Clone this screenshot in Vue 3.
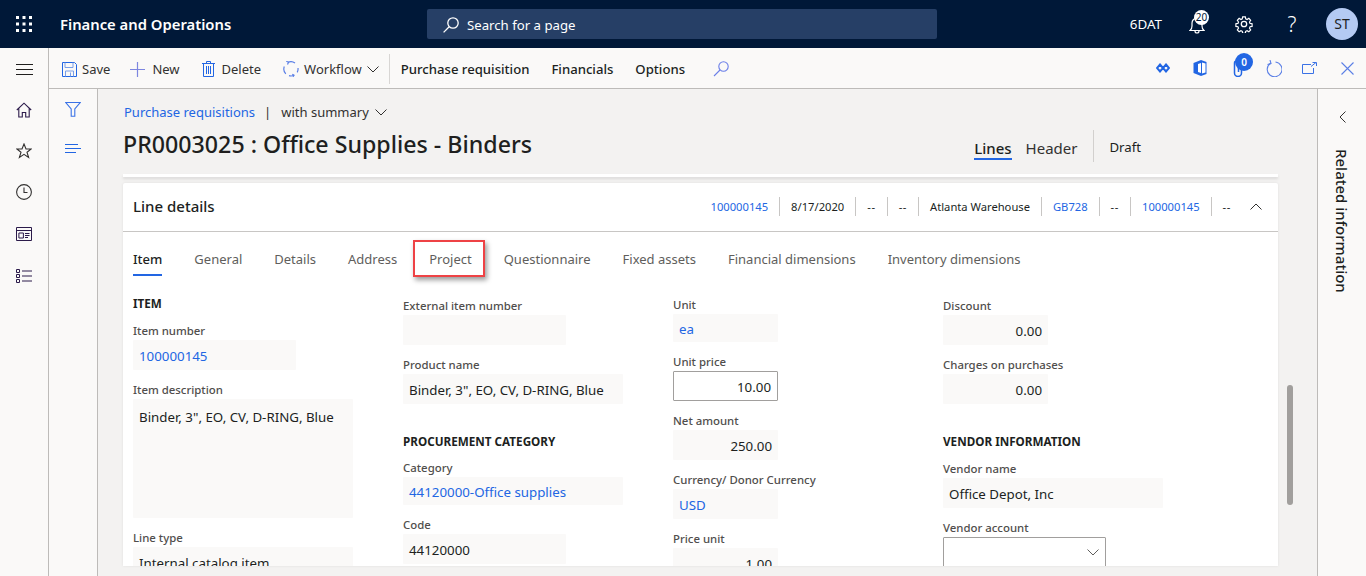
<script setup>
const columns = [
  [
    { heading: 'ITEM', first: true },
    { label: 'Item number', value: '100000145', w: 163, link: true },
    { label: 'Item description', value: 'Binder, 3", EO, CV, D-RING, Blue', w: 220, h: 119 },
    { label: 'Line type', value: 'Internal catalog item', w: 220 },
  ],
  [
    { label: 'External item number', value: '', w: 163 },
    { label: 'Product name', value: 'Binder, 3", EO, CV, D-RING, Blue', w: 220 },
    { heading: 'PROCUREMENT CATEGORY' },
    { label: 'Category', value: '44120000-Office supplies', w: 220, link: true, compact: true },
    { label: 'Code', value: '44120000', w: 163 },
  ],
  [
    { label: 'Unit', value: 'ea', w: 105, link: true, compact: true },
    { label: 'Unit price', value: '10.00', w: 105, right: true, edit: true },
    { label: 'Net amount', value: '250.00', w: 105, right: true },
    { label: 'Currency/ Donor Currency', value: 'USD', w: 105, link: true },
    { label: 'Price unit', value: '1.00', w: 105, right: true },
  ],
  [
    { label: 'Discount', value: '0.00', w: 105, right: true },
    { label: 'Charges on purchases', value: '0.00', w: 105, right: true },
    { heading: 'VENDOR INFORMATION' },
    { label: 'Vendor name', value: 'Office Depot, Inc', w: 220 },
    { label: 'Vendor account', value: '', w: 163, edit: true, select: true },
  ],
]
const summary = [
  { t: '100000145', link: true }, { t: '8/17/2020' }, { t: '--' }, { t: '--' },
  { t: 'Atlanta Warehouse' }, { t: 'GB728', link: true }, { t: '--' },
  { t: '100000145', link: true }, { t: '--' },
]
const tabs = ['Item', 'General', 'Details', 'Address', 'Project', 'Questionnaire', 'Fixed assets', 'Financial dimensions', 'Inventory dimensions']
</script>

<template>
  <div class="app">
    <header class="topbar">
      <svg class="waffle" width="16" height="16" viewBox="0 0 16 16" fill="#fff">
        <rect x="0" y="0" width="3" height="3" /><rect x="6.5" y="0" width="3" height="3" /><rect x="13" y="0" width="3" height="3" />
        <rect x="0" y="6.5" width="3" height="3" /><rect x="6.5" y="6.5" width="3" height="3" /><rect x="13" y="6.5" width="3" height="3" />
        <rect x="0" y="13" width="3" height="3" /><rect x="6.5" y="13" width="3" height="3" /><rect x="13" y="13" width="3" height="3" />
      </svg>
      <div class="brand">Finance and Operations</div>
      <div class="search">
        <svg width="18" height="18" viewBox="0 0 18 18" fill="none" stroke="#fff" stroke-width="1.3"><circle cx="11" cy="7" r="5.2" /><path d="M7.2 10.8 1.6 16.4" /></svg>
        <span>Search for a page</span>
      </div>
      <div class="top-right">
        <span class="company">6DAT</span>
        <span class="bell">
          <svg width="16" height="18" viewBox="0 0 16 18" fill="none" stroke="#fff" stroke-width="1.2"><path d="M1 14.5c1.5-1 2-2 2-4.5V7a5 5 0 0 1 10 0v3c0 2.500.5 3.500 2 4.500Z" /><path d="M6 15a2 2 0 0 0 4 0" /></svg>
          <b class="bell-badge">20</b>
        </span>
        <svg class="gear" width="18" height="18" viewBox="0 0 18 18" fill="none" stroke="#fff" stroke-width="1.3"><circle cx="9" cy="9" r="2.7" /><path d="M7.500 1h3l.4 2.300 1.500.7 2-1.300 2 2.200-1.300 1.900.6 1.500 2.300.4v3l-2.300.4-.6 1.500 1.300 1.900-2 2.200-2-1.300-1.500.7-.4 2.300h-3l-.4-2.300-1.500-.7-2 1.300-2-2.200 1.300-1.900-.6-1.500-2.300-.4v-3l2.300-.4.6-1.500L1.600 4.900l2-2.200 2 1.300 1.500-.7Z" transform="translate(.9 .9) scale(.9)" /></svg>
        <span class="help">?</span>
        <span class="avatar">ST</span>
      </div>
    </header>

    <div class="shell">
      <nav class="nav">
        <svg class="burger" width="17" height="11" viewBox="0 0 17 11" stroke="#201f1e"><path d="M0 .5h17M0 5.500h17M0 10.500h17" /></svg>
        <svg width="16" height="16" viewBox="0 0 16 16" fill="none" stroke="#2b1a4a" stroke-width="1.100"><path d="M.8 8 8 1.200 15.200 8M2.800 6.500V15h3.500v-4.500h3.400V15h3.500V6.500" /></svg>
        <svg width="16" height="16" viewBox="0 0 16 16" fill="none" stroke="#323130" stroke-width="1.100"><path d="m8 1 2 5h5.200l-4.200 3.200 1.600 5.300L8 11.300l-4.600 3.200L5 9.200.8 6H6Z" /></svg>
        <svg width="16" height="16" viewBox="0 0 16 16" fill="none" stroke="#323130" stroke-width="1.100"><circle cx="8" cy="8" r="7.400" /><path d="M8 3.500V8.500H11.500" /></svg>
        <svg width="16" height="14" viewBox="0 0 16 14" fill="none" stroke="#2b1a4a"><path d="M.5.500h15v13H.5ZM.5 3.500h15M2.900 6h4.500v5H2.900ZM9 6.500h4.500M9 8.500h4.500M9 10.500h3" /></svg>
        <svg width="16" height="14" viewBox="0 0 16 14" fill="none" stroke="#2b1a4a"><path d="M.5.500h3v3h-3ZM.5 5.500h3v3h-3ZM.5 10.500h3v3h-3ZM6 2h10M6 7h10M6 12h10" /></svg>
      </nav>
      <div class="rest">
        <div class="toolbar">
          <button class="tool t-save">
            <svg width="15" height="15" viewBox="0 0 15 15" fill="none" stroke="#2266e3"><path d="M.5.500h12l2 2v12H.500Z" /><path d="M3 .5v5h8v-5M3.500 14.500v-5.500h8v5.500M8.500 10.500v4" stroke="#7a9fe8" /></svg>
            <span>Save</span>
          </button>
          <button class="tool t-new">
            <svg width="15" height="15" viewBox="0 0 15 15" stroke="#7d86e0" stroke-width="1.200"><path d="M7.500 0v15M0 7.500h15" /></svg>
            <span>New</span>
          </button>
          <button class="tool t-delete">
            <svg width="13" height="16" viewBox="0 0 13 16" fill="none" stroke="#2266e3"><path d="M0 2.500h13M4.500 2.500V.5h4v2M1.500 2.500v13h10v-13M4.500 5v8M6.500 5v8M8.500 5v8" /></svg>
            <span>Delete</span>
          </button>
          <button class="tool t-flow">
            <svg width="16" height="16" viewBox="0 0 16 16" fill="none" stroke="#5a7fe6" stroke-width="1.200"><path d="M5 1.300A7 7 0 0 1 12 2M15 7a7 7 0 0 1-.8 4.400M11 14.300a7 7 0 0 1-5 .4M2.800 12.800A7 7 0 0 1 1.300 5.500" /><path d="m4.500 3.500 1-2.200-2.200-1M10 15.800l1-1.500-1.700-1" /></svg>
            <span>Workflow</span>
            <svg class="chev" width="12" height="7" viewBox="0 0 12 7" fill="none" stroke="#323130"><path d="m.5.500 5.500 5.500L11.500.5" /></svg>
          </button>
          <i class="tool-sep"></i>
          <button class="menu">Purchase requisition</button>
          <button class="menu">Financials</button>
          <button class="menu">Options</button>
          <svg class="t-search" width="16" height="16" viewBox="0 0 16 16" fill="none" stroke="#6b7fe8" stroke-width="1.100"><circle cx="10.500" cy="5.500" r="4.700" /><path d="M7 9 1 15" /></svg>
          <div class="tool-right">
            <svg width="14" height="10" viewBox="0 0 14 10" fill="none" stroke="#2266e3" stroke-width="2"><path d="m4 1.500 3 3.500-3 3.500L1 5ZM10 1.500 13 5l-3 3.500L7 5Z" /></svg>
            <svg width="14" height="16" viewBox="0 0 14 16"><path d="M8 0 .500 3v10L8 16l5.500-2V2Z" fill="#2266e3" /><path d="M5 4l3-1v10l-3-1Z" fill="#fff" /><path d="M9 2.500l3.500 1v9l-3.500 1Z" fill="#fff" /></svg>
            <span class="clip">
              <svg width="10" height="18" viewBox="0 0 10 18" fill="none" stroke="#2266e3" stroke-width="1.500"><path d="M8.500 4v10a3.500 3.500 0 0 1-7 0V4a2 2 0 0 1 4 0v9" /></svg>
              <b class="clip-badge">0</b>
            </span>
            <svg width="16" height="17" viewBox="0 0 16 17" fill="none" stroke="#5a7fe6" stroke-width="1.100"><path d="M4.500 3.200a7.400 7.400 0 1 0 5-1.200" /><path d="M4 0 5 3.500 1.500 4.500" /></svg>
            <svg width="15" height="12" viewBox="0 0 15 12" fill="none" stroke="#3a72e6"><path d="M9 2.500H.5v9h11V6M9 4.500l5-4M10.500.5h4v3.500" /></svg>
            <svg width="13" height="13" viewBox="0 0 13 13" stroke="#5a7fe6" stroke-width="1.100"><path d="m.5.500 12 12M12.500.5l-12 12" /></svg>
          </div>
        </div>
        <div class="work">
          <aside class="filter">
            <svg width="16" height="15" viewBox="0 0 16 15" fill="none" stroke="#3a72e6" stroke-width="1.100"><path d="M.8.500h14.400L9.800 7v7.200H6.200V7Z" /></svg>
            <svg width="16" height="9" viewBox="0 0 16 9" stroke="#2266e3"><path d="M0 .5h13M0 4.500h16M0 8.500h11" /></svg>
          </aside>
          <main class="main">
            <section class="page-head">
              <div class="crumb">
                <a>Purchase requisitions</a><i>|</i><span>with summary</span>
                <svg width="12" height="7" viewBox="0 0 12 7" fill="none" stroke="#323130"><path d="m.5.500 5.500 5.500L11.500.5" /></svg>
              </div>
              <div class="title-row">
                <h1>PR0003025 : Office Supplies - Binders</h1>
                <div class="views">
                  <span class="view on">Lines</span>
                  <span class="view">Header</span>
                  <i class="view-sep"></i>
                  <span class="status">Draft</span>
                </div>
              </div>
            </section>
            <div class="prev-edge"></div>
            <section class="card">
              <div class="card-head">
                <h2>Line details</h2>
                <div class="summary">
                  <span v-for="(s, i) in summary" :key="i" :class="{ lnk: s.link, dash: s.t === '--' }">{{ s.t }}</span>
                </div>
                <svg class="up" width="12" height="7" viewBox="0 0 12 7" fill="none" stroke="#323130"><path d="M.5 6.500 6 1l5.500 5.500" /></svg>
              </div>
              <div class="tabs">
                <span v-for="t in tabs" :key="t" class="tab" :class="{ on: t === 'Item', mark: t === 'Project' }">{{ t }}</span>
              </div>
              <div class="form">
                <div v-for="(col, c) in columns" :key="c" class="col">
                  <template v-for="(f, i) in col" :key="i">
                    <div v-if="f.heading" class="heading" :class="{ first: f.first }">{{ f.heading }}</div>
                    <div v-else class="field">
                      <label>{{ f.label }}</label>
                      <div class="box" :class="{ lnk: f.link, right: f.right, edit: f.edit, tall: f.h, compact: f.compact }" :style="{ width: f.w + 'px', height: f.h ? f.h + 'px' : null }">
                        {{ f.value }}
                        <svg v-if="f.select" class="sel" width="12" height="7" viewBox="0 0 12 7" fill="none" stroke="#605e5c"><path d="m.5.500 5.500 5.500L11.500.5" /></svg>
                      </div>
                    </div>
                  </template>
                </div>
              </div>
            </section>
            <div class="scroll"></div>
          </main>
          <aside class="related">
            <svg width="7" height="12" viewBox="0 0 7 12" fill="none" stroke="#323130"><path d="M6.500.5 1 6l5.500 5.500" /></svg>
            <span>Related information</span>
          </aside>
        </div>
      </div>
    </div>
  </div>
</template>

<style>
html, body { margin: 0; overflow: hidden; background: #f3f2f1; }
</style>

<style scoped>
.app { width: 1366px; height: 576px; display: flex; flex-direction: column; overflow: hidden; font-family: "Noto Sans", "Open Sans", sans-serif; color: #201f1e; font-size: 13px; }
svg { flex: none; display: block; }
button { font: inherit; color: inherit; background: none; border: 0; padding: 0; }
i { font-style: normal; }

.topbar { height: 48px; flex: none; background: #001838; color: #fff; display: flex; align-items: center; }
.waffle { margin-left: 16px; }
.brand { margin-left: 28px; font-size: 14.8px; font-weight: 600; width: 367px; white-space: nowrap; }
.search { width: 510px; height: 30px; background: #263f66; border-radius: 2px; display: flex; align-items: center; gap: 7px; padding: 2px 0 0 15px; box-sizing: border-box; font-size: 13.2px; }
.top-right { margin-left: auto; display: flex; align-items: center; }
.company { font-size: 13.4px; margin-right: 27px; }
.bell { position: relative; margin-right: 30px; display: block; margin-top: 2px; }
.bell-badge { position: absolute; left: 5px; top: -6px; width: 15px; height: 15px; border-radius: 50%; background: #fff; color: #001838; font-size: 10px; font-weight: 400; text-align: center; line-height: 15px; }
.gear { margin-right: 33px; }
.help { font-size: 21px; font-weight: 300; margin-right: 28px; width: 12px; text-align: center; }
.avatar { width: 32px; height: 32px; border-radius: 50%; background: #b4caf3; color: #201f1e; font-size: 14px; text-align: center; line-height: 32px; margin-right: 8px; }

.shell { flex: 1; display: flex; min-height: 0; }
.nav { width: 48px; flex: none; border-right: 1px solid #bdbbb9; background: #faf9f8; display: flex; flex-direction: column; align-items: center; padding-top: 16px; }
.nav .burger { margin-bottom: 27px; }
.nav svg:nth-child(2) { margin-bottom: 25px; }
.nav svg:nth-child(3) { margin-bottom: 25px; }
.nav svg:nth-child(4) { margin-bottom: 27px; }
.nav svg:nth-child(5) { margin-bottom: 28px; }
.rest { flex: 1; min-width: 0; display: flex; flex-direction: column; }

.toolbar { height: 38px; padding-top: 2px; flex: none; border-bottom: 1px solid #bdbbb9; background: #faf9f8; display: flex; align-items: center; }
.tool { display: flex; align-items: center; gap: 5px; font-size: 13px; white-space: nowrap; color: #323130; }
.t-save { margin-left: 13px; }
.t-new { margin-left: 20px; gap: 7px; }
.t-delete { margin-left: 22px; gap: 7px; }
.t-flow { margin-left: 22px; }
.tool-sep { width: 1px; height: 30px; background: #d8d6d4; margin-left: 10px; }
.menu { margin-left: 22px; font-size: 13.15px; font-weight: 500; white-space: nowrap; }
.tool-sep + .menu { margin-left: 11px; }
.t-search { margin-left: 28px; }
.tool-right { margin-left: auto; margin-top: -2px; display: flex; align-items: center; margin-right: 12px; }
.tool-right > :nth-child(2) { margin-left: 23px; }
.tool-right > :nth-child(3) { margin-left: 26px; }
.tool-right > :nth-child(4) { margin-left: 23px; }
.tool-right > :nth-child(5) { margin-left: 20px; }
.tool-right > :nth-child(6) { margin-left: 24px; }
.clip { position: relative; display: block; }
.clip-badge { position: absolute; left: 2px; top: -6px; width: 18px; height: 18px; border-radius: 50%; background: #2266e3; color: #fff; font-size: 10px; font-weight: 600; text-align: center; line-height: 18px; }

.work { flex: 1; min-height: 0; display: flex; }
.filter { width: 48px; flex: none; border-right: 1px solid #bdbbb9; background: #faf9f8; display: flex; flex-direction: column; align-items: center; padding-top: 13px; gap: 27px; }
.main { flex: 1; min-width: 0; position: relative; background: #f3f2f1; display: flex; flex-direction: column; }
.related { width: 48px; flex: none; border-left: 1px solid #bdbbb9; background: #faf9f8; display: flex; flex-direction: column; align-items: center; padding-top: 22px; gap: 26px; }
.related span { writing-mode: vertical-rl; font-size: 15px; font-weight: 500; white-space: nowrap; }

.page-head { height: 85px; flex: none; padding: 13px 26px 0 26px; box-sizing: border-box; }
.crumb { display: flex; align-items: center; font-size: 13px; height: 20px; }
.crumb a { color: #2266e3; }
.crumb i { margin: 0 8px 0 9px; color: #323130; }
.crumb span { color: #323130; margin-left: 2px; margin-right: 6px; }
.title-row { display: flex; }
h1 { margin: 6px 0 0 -1px; font-size: 23.2px; line-height: 32px; font-weight: 500; white-space: nowrap; }
.views { margin-left: auto; margin-right: 150px; display: flex; align-items: flex-start; padding-top: 8px; }
.view { font-size: 15px; height: 30px; line-height: 26px; padding-top: 5px; margin-right: 15px; box-sizing: border-box; color: #323130; }
.view.on { font-weight: 500; color: #201f1e; border-bottom: 2px solid #2266e3; margin-right: 14px; }
.view-sep { width: 1px; height: 32px; background: #d2d0ce; margin: 0 15px 0 1px; }
.status { font-size: 13.2px; line-height: 34px; }

.prev-edge { width: 1155px; height: 3px; margin-left: 25px; background: #fff; flex: none; box-shadow: 0 2px 3px rgba(0,0,0,.1); }
.card { width: 1155px; margin: 6px 0 0 25px; height: 383px; flex: none; background: #fff; overflow: hidden; border-radius: 2px 2px 0 0; box-shadow: 0 0 3px rgba(0,0,0,.08); }
.card-head { height: 48px; border-bottom: 1px solid #c8c6c4; display: flex; align-items: center; padding-left: 10px; }
h2 { margin: 0 0 2px; font-size: 15px; font-weight: 500; }
.summary { margin-left: auto; margin-bottom: 2px; display: flex; font-size: 11.2px; }
.summary span { padding: 0 11px; line-height: 19px; border-left: 1px solid #c8c6c4; white-space: nowrap; }
.summary span:first-child { border-left: 0; }
.summary .lnk { color: #2266e3; }
.summary .dash { letter-spacing: .6px; }
.up { margin: 0 16px 2px 8px; }
.tabs { display: flex; height: 44px; padding: 8px 0 0 10px; gap: 32px; }
.tab { position: relative; height: 36px; line-height: 38px; font-size: 13px; color: #605e5c; white-space: nowrap; box-sizing: border-box; }
.tab.on { color: #201f1e; font-weight: 500; border-bottom: 2px solid #2266e3; }
.tab.mark::after { content: ""; position: absolute; left: -16px; right: -13px; top: 0; height: 37px; box-sizing: border-box; border: 2px solid #ee4245; box-shadow: 2px 3px 5px rgba(0,0,0,.4); }
.form { display: flex; padding: 10px 0 0 10px; }
.col { width: 270px; flex: none; }
.col:nth-child(even) { padding-top: 1px; }
.heading { font-size: 11.7px; font-weight: 700; line-height: 18px; margin: 28px 0 7px; white-space: nowrap; }
.heading.first { margin: 0 0 8px; }
.col:nth-child(4) .heading { margin-bottom: 8px; }
label { display: block; height: 20px; font-size: 11.4px; line-height: 22px; color: #504e4c; font-weight: 500; white-space: nowrap; }
.field { margin-bottom: 9px; }
.box { height: 30px; line-height: 33px; box-sizing: border-box; background: #faf9f8; padding: 0 6px; font-size: 13.3px; white-space: nowrap; position: relative; border-radius: 1px; }
.box.compact { height: 28px; line-height: 31px; }
.box.tall { line-height: 36px; }
.box.lnk { color: #2266e3; }
.box.right { text-align: right; }
.box.edit { background: #fff; border: 1px solid #a19f9d; line-height: 31px; }
.sel { position: absolute; right: 6px; top: 11px; }
.scroll { position: absolute; left: 1189px; top: 296px; width: 6px; height: 120px; border-radius: 3px; background: #a19f9d; }
</style>
